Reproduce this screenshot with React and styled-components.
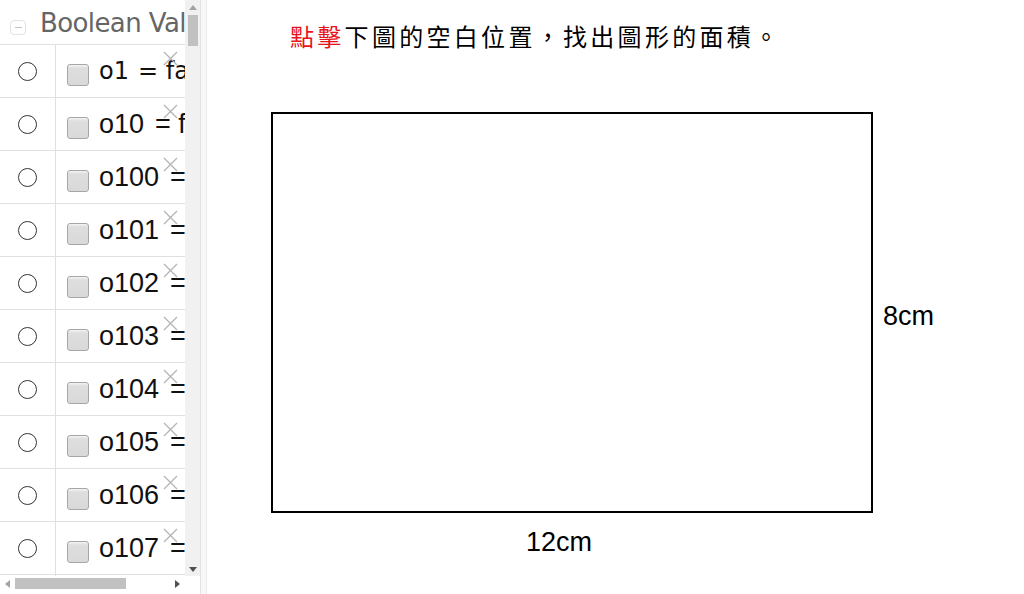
import React from 'react'
import styled, {createGlobalStyle} from 'styled-components'

const GlobalStyle = createGlobalStyle`
	html, body {
		margin: 0;
		padding: 0;
		background: #fff;
	}
	body {
		font-family: "Liberation Sans", Arial, sans-serif;
	}
`

const Page = styled.div`
	display: flex;
	width: 1024px;
	height: 594px;
	overflow: hidden;
	background: #fff;
`

// algebra view on the left
const Sidebar = styled.div`
	display: grid;
	grid-template-columns: 185px 15px;
	grid-template-rows: 576px 15px 1fr;
	width: 200px;
	height: 594px;
	flex-shrink: 0;
`
const List = styled.div`
	grid-column: 1;
	grid-row: 1;
	min-width: 0;
	overflow: hidden;
	background: #fff;
`
const Header = styled.div`
	display: flex;
	align-items: center;
	gap: 14px;
	height: 45px;
	padding: 1px 0 0 10px;
	box-sizing: border-box;
	border-bottom: 1px solid #e0e0e0;
	font-family: "DejaVu Sans", sans-serif;
	font-size: 26px;
	letter-spacing: -0.6px;
	color: #666;
	white-space: nowrap;
`
const Collapse = styled.span`
	display: inline-flex;
	flex-shrink: 0;
	align-items: center;
	justify-content: center;
	width: 14px;
	height: 13px;
	margin-top: 10px;
	border: 1px solid #e2e2e2;
	border-radius: 4px;
	&::after {
		content: '';
		width: 7px;
		height: 1px;
		background: #c4c4c4;
	}
`
const Row = styled.div`
	position: relative;
	display: grid;
	grid-template-columns: 56px minmax(0, 1fr);
	height: 53px;
	box-sizing: border-box;
	border-bottom: 1px solid #e0e0e0;
`
const RadioCell = styled.div`
	display: flex;
	align-items: center;
	justify-content: center;
	border-right: 1px solid #e0e0e0;
`
const Radio = styled.span`
	width: 17px;
	height: 17px;
	margin-top: 1px;
	border: 1px solid #333;
	border-radius: 50%;
`
const ItemCell = styled.div`
	display: flex;
	align-items: center;
	gap: 10px;
	padding-left: 11px;
	min-width: 0;
	overflow: hidden;
	white-space: nowrap;
`
const Check = styled.span`
	flex-shrink: 0;
	width: 20px;
	height: 20px;
	margin-top: 8px;
	border: 1px solid #a6a6a6;
	border-radius: 3px;
	background: linear-gradient(#f4f4f4 0, #dedede 3px, #d9d9d9 100%);
`
const Label = styled.span`
	flex-shrink: 0;
	font-family: ${p => p.$math ? '"DejaVu Sans", sans-serif' : '"Liberation Sans", Arial, sans-serif'};
	font-size: ${p => p.$math ? '24px' : '27px'};
	color: #111;
`
const Value = styled.span`
	margin-left: ${p => p.$math ? 9 : 11}px;
`
const Remove = styled.span`
	position: absolute;
	top: 6px;
	left: 163px;
	width: 15px;
	height: 15px;
	display: flex;
`

// scrollbars
const VScroll = styled.div`
	grid-column: 2;
	grid-row: 1;
	background: #f1f1f1;
	display: flex;
	flex-direction: column;
	align-items: center;
`
const ArrowBtn = styled.span`
	display: flex;
	align-items: center;
	justify-content: center;
	width: 15px;
	height: 14px;
	flex-shrink: 0;
`
const VThumb = styled.span`
	width: 10px;
	height: 31px;
	margin-top: 1px;
	background: #c1c1c1;
`
const Spacer = styled.span`
	flex: 1;
`
const HScroll = styled.div`
	grid-column: 1;
	grid-row: 2;
	display: flex;
	align-items: center;
	background: #fff;
`
const HThumb = styled.span`
	width: 111px;
	height: 11px;
	background: #c1c1c1;
`

const Divider = styled.div`
	width: 5px;
	flex-shrink: 0;
	background: #f8f8f8;
	border-left: 1px solid #e2e2e2;
	border-right: 1px solid #ececec;
`

// graphics view
const Canvas = styled.div`
	flex: 1;
	padding: 21px 0 0 83px;
	background: #fff;
`
const Prompt = styled.div`
	font-family: "Noto Sans CJK TC", "Noto Sans CJK SC", sans-serif;
	font-size: 24px;
	line-height: 30px;
	letter-spacing: 3.3px;
	color: #000;
	white-space: nowrap;
`
const Red = styled.span`
	color: #e8141b;
`
const Figure = styled.div`
	display: grid;
	grid-template-columns: 602px auto;
	grid-template-rows: 401px auto;
	margin: 61px 0 0 -19px;
`
const Rect = styled.div`
	border: 2px solid #000;
	box-sizing: border-box;
`
const Measure = styled.div`
	font-family: "Liberation Sans", Arial, sans-serif;
	font-size: 27px;
	line-height: 30px;
	color: #000;
`
const SideMeasure = styled(Measure)`
	align-self: center;
	padding: 7px 0 0 10px;
`
const BottomMeasure = styled(Measure)`
	padding: 14px 0 0 255px;
`

const Tri = ({dir}) => {
	const pts = {
		up: '1,6 9,6 5,1',
		down: '1,1 9,1 5,6',
		left: '6,1 6,9 1,5',
		right: '1,1 1,9 6,5',
	}[dir]
	const horiz = dir === 'left' || dir === 'right'
	return (
		<svg width={horiz ? 7 : 10} height={horiz ? 10 : 7} viewBox={horiz ? '0 0 7 10' : '0 0 10 7'}>
			<polygon points={pts} fill={dir === 'right' || dir === 'down' ? '#505050' : '#a3a3a3'} />
		</svg>
	)
}

const Cross = () => (
	<svg width="15" height="15" viewBox="0 0 15 15">
		<path d="M1 1 L14 14 M14 1 L1 14" stroke="#b4b4b4" strokeWidth="1.3" fill="none" />
	</svg>
)

const items = [
	{name: 'o1', math: true},
	{name: 'o10'},
	{name: 'o100'},
	{name: 'o101'},
	{name: 'o102'},
	{name: 'o103'},
	{name: 'o104'},
	{name: 'o105'},
	{name: 'o106'},
	{name: 'o107'},
	{name: 'o108'},
]

export default function App(){
	return(
		<Page>
			<GlobalStyle />
			<Sidebar>
				<List>
					<Header>
						<Collapse />
						Boolean Value
					</Header>
					{items.map(item =>
						<Row key={item.name}>
							<RadioCell><Radio /></RadioCell>
							<ItemCell>
								<Check />
								<Label $math={item.math}>{item.name}<Value $math={item.math}>= false</Value></Label>
							</ItemCell>
							<Remove><Cross /></Remove>
						</Row>
					)}
				</List>
				<VScroll>
					<ArrowBtn><Tri dir="up" /></ArrowBtn>
					<VThumb />
					<Spacer />
					<ArrowBtn><Tri dir="down" /></ArrowBtn>
				</VScroll>
				<HScroll>
					<ArrowBtn><Tri dir="left" /></ArrowBtn>
					<HThumb />
					<Spacer />
					<ArrowBtn><Tri dir="right" /></ArrowBtn>
				</HScroll>
			</Sidebar>
			<Divider />
			<Canvas>
				<Prompt><Red>點擊</Red>下圖的空白位置，找出圖形的面積。</Prompt>
				<Figure>
					<Rect />
					<SideMeasure>8cm</SideMeasure>
					<BottomMeasure>12cm</BottomMeasure>
				</Figure>
			</Canvas>
		</Page>
	)
}
